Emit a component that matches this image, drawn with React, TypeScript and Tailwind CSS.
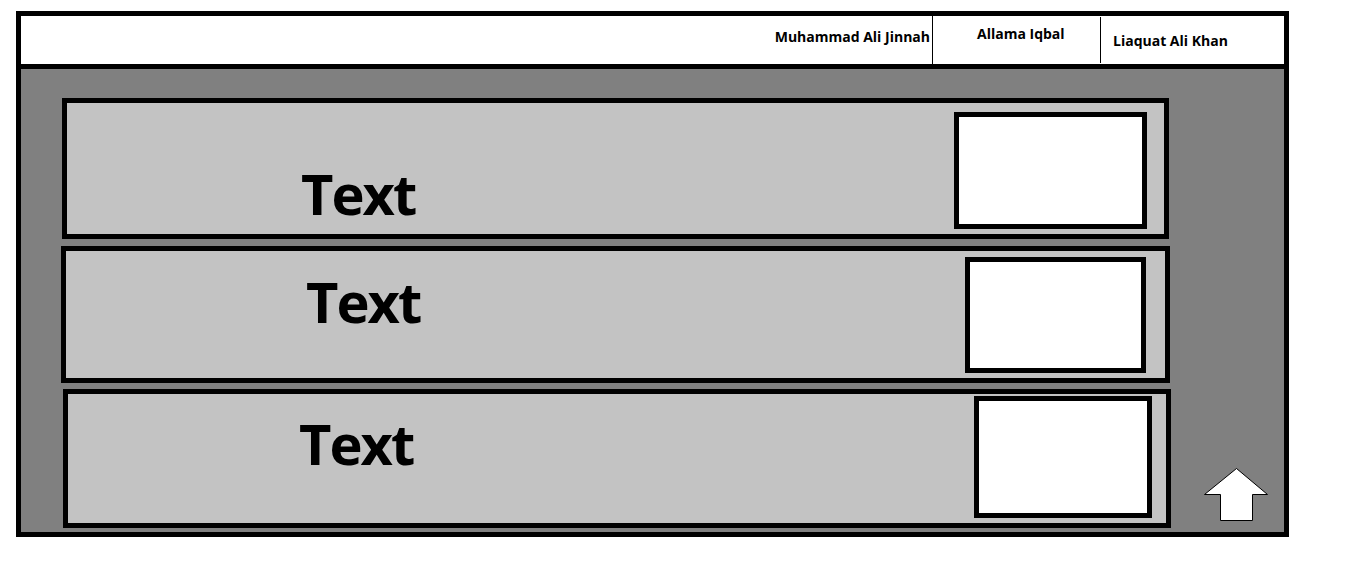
export default function App() {
  const cards = [
    {
      card: 'ml-[41px] w-[1107px] h-[141px]',
      text: 'ml-[234px] mt-[62px]',
      box: 'mr-[17px] mt-[9px] w-[193px] h-[117px]',
    },
    {
      card: 'ml-[40px] mt-[7px] w-[1109px] h-[137px]',
      text: 'ml-[240px] mt-[22px]',
      box: 'mr-[19px] mt-[6px] w-[181px] h-[116px]',
    },
    {
      card: 'ml-[42px] mt-[6px] w-[1108px] h-[139px]',
      text: 'ml-[231px] mt-[21px]',
      box: 'mr-[14px] mt-[2px] w-[178px] h-[122px]',
    },
  ];

  return (
    <div className="w-[1354px] h-[580px] bg-white pt-[11px] pl-[16px] font-['Open_Sans',sans-serif]">
      <div className="w-[1273px] h-[526px] border-[5px] border-black flex flex-col box-border">
        {/* header */}
        <div className="h-[53px] bg-white border-b-[5px] border-black flex text-[14px] font-bold text-black leading-none">
          <div className="flex-1 flex justify-end pr-[2px]">
            <span className="mt-[14px]">Muhammad Ali Jinnah</span>
          </div>
          <div className="w-px bg-black" />
          <div className="w-[167px] pl-[44px]">
            <span className="block mt-[11px]">Allama Iqbal</span>
          </div>
          <div className="w-px h-[46px] mt-[1px] bg-black" />
          <div className="w-[183px] pl-[12px]">
            <span className="block mt-[18px]">Liaquat Ali Khan</span>
          </div>
        </div>

        {/* content */}
        <div className="flex-1 bg-[#808080] flex">
          <div className="w-[1150px] pt-[29px] flex flex-col">
            {cards.map((c, i) => (
              <div
                key={i}
                className={`${c.card} border-[5px] border-black bg-[#c3c3c3] flex items-start box-border`}
              >
                <span className={`${c.text} text-[56px] font-bold leading-none tracking-[-2px] text-black`}>Text</span>
                <div className={`${c.box} ml-auto border-[5px] border-black bg-white box-border`} />
              </div>
            ))}
          </div>
          <div className="flex-1 flex flex-col justify-end pl-[33px] pb-[11px]">
            <svg width="64" height="53" viewBox="0 0 64 53">
              <polygon
                points="32.5,0.5 63.5,26.5 48.5,26.5 48.5,52.5 16.5,52.5 16.5,26.5 0.5,26.5"
                fill="white"
                stroke="black"
                strokeWidth="1"
              />
            </svg>
          </div>
        </div>
      </div>
    </div>
  );
}
